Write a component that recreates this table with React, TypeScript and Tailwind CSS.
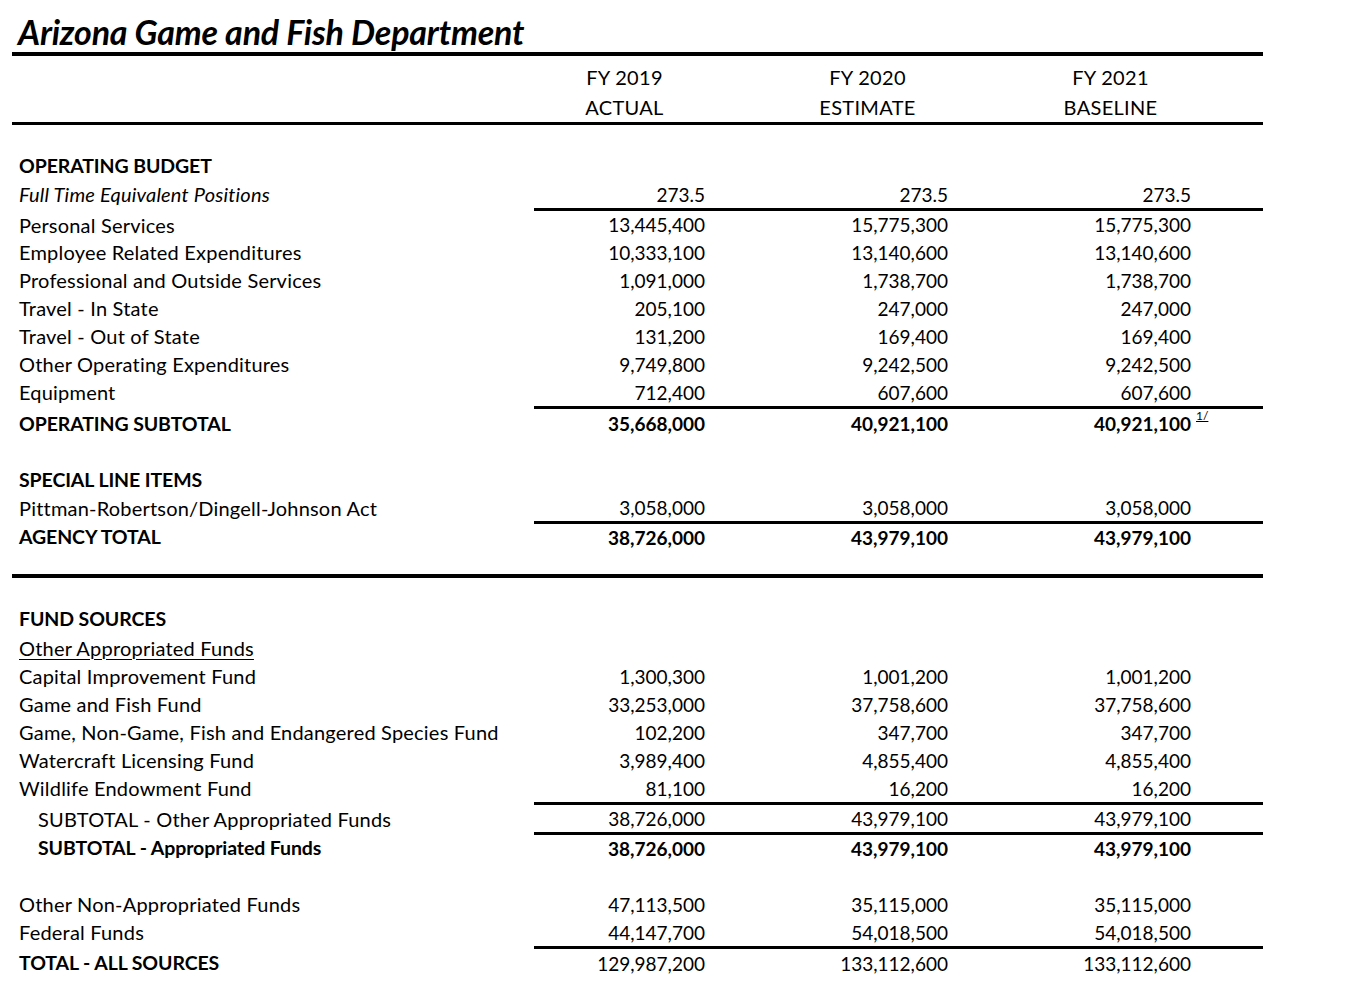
import React from "react";

type Row =
  | { kind: "spacer"; h: string }
  | { kind: "line" }
  | { kind: "thick" }
  | {
      kind: "row";
      h: string;
      label: string;
      labelStyle?: "bold" | "italic" | "underline" | "indent" | "indentBold";
      values?: string[];
      boldValues?: boolean;
      footnote?: boolean;
    };

const rows: Row[] = [
  { kind: "spacer", h: "h-[27px]" },
  { kind: "row", h: "h-[28px]", label: "OPERATING BUDGET", labelStyle: "bold" },
  { kind: "row", h: "h-[28px]", label: "Full Time Equivalent Positions", labelStyle: "italic", values: ["273.5", "273.5", "273.5"] },
  { kind: "line" },
  { kind: "row", h: "h-[27px]", label: "Personal Services", values: ["13,445,400", "15,775,300", "15,775,300"] },
  { kind: "row", h: "h-[28px]", label: "Employee Related Expenditures", values: ["10,333,100", "13,140,600", "13,140,600"] },
  { kind: "row", h: "h-[28px]", label: "Professional and Outside Services", values: ["1,091,000", "1,738,700", "1,738,700"] },
  { kind: "row", h: "h-[28px]", label: "Travel - In State", values: ["205,100", "247,000", "247,000"] },
  { kind: "row", h: "h-[28px]", label: "Travel - Out of State", values: ["131,200", "169,400", "169,400"] },
  { kind: "row", h: "h-[28px]", label: "Other Operating Expenditures", values: ["9,749,800", "9,242,500", "9,242,500"] },
  { kind: "row", h: "h-[28px]", label: "Equipment", values: ["712,400", "607,600", "607,600"] },
  { kind: "line" },
  { kind: "row", h: "h-[29px]", label: "OPERATING SUBTOTAL", labelStyle: "bold", values: ["35,668,000", "40,921,100", "40,921,100"], boldValues: true, footnote: true },
  { kind: "spacer", h: "h-[28px]" },
  { kind: "row", h: "h-[28px]", label: "SPECIAL LINE ITEMS", labelStyle: "bold" },
  { kind: "row", h: "h-[27px]", label: "Pittman-Robertson/Dingell-Johnson Act", values: ["3,058,000", "3,058,000", "3,058,000"] },
  { kind: "line" },
  { kind: "row", h: "h-[26px]", label: "AGENCY TOTAL", labelStyle: "bold", values: ["38,726,000", "43,979,100", "43,979,100"], boldValues: true },
  { kind: "spacer", h: "h-[24px]" },
  { kind: "thick" },
  { kind: "spacer", h: "h-[27px]" },
  { kind: "row", h: "h-[28px]", label: "FUND SOURCES", labelStyle: "bold" },
  { kind: "row", h: "h-[29px]", label: "Other Appropriated Funds", labelStyle: "underline" },
  { kind: "row", h: "h-[28px]", label: "Capital Improvement Fund", values: ["1,300,300", "1,001,200", "1,001,200"] },
  { kind: "row", h: "h-[28px]", label: "Game and Fish Fund", values: ["33,253,000", "37,758,600", "37,758,600"] },
  { kind: "row", h: "h-[28px]", label: "Game, Non-Game, Fish and Endangered Species Fund", values: ["102,200", "347,700", "347,700"] },
  { kind: "row", h: "h-[28px]", label: "Watercraft Licensing Fund", values: ["3,989,400", "4,855,400", "4,855,400"] },
  { kind: "row", h: "h-[28px]", label: "Wildlife Endowment Fund", values: ["81,100", "16,200", "16,200"] },
  { kind: "line" },
  { kind: "row", h: "h-[27px]", label: "SUBTOTAL - Other Appropriated Funds", labelStyle: "indent", values: ["38,726,000", "43,979,100", "43,979,100"] },
  { kind: "line" },
  { kind: "row", h: "h-[26px]", label: "SUBTOTAL - Appropriated Funds", labelStyle: "indentBold", values: ["38,726,000", "43,979,100", "43,979,100"], boldValues: true },
  { kind: "spacer", h: "h-[29px]" },
  { kind: "row", h: "h-[28px]", label: "Other Non-Appropriated Funds", values: ["47,113,500", "35,115,000", "35,115,000"] },
  { kind: "row", h: "h-[28px]", label: "Federal Funds", values: ["44,147,700", "54,018,500", "54,018,500"] },
  { kind: "line" },
  { kind: "row", h: "h-[28px]", label: "TOTAL - ALL SOURCES", labelStyle: "bold", values: ["129,987,200", "133,112,600", "133,112,600"] },
];

function labelClass(s?: string) {
  switch (s) {
    case "bold":
      return "pl-[7px] font-bold text-[19.5px] tracking-[-0.1px]";
    case "italic":
      return "pl-[7px] italic text-[20px] tracking-[0.2px]";
    case "underline":
      return "pl-[7px] underline underline-offset-[3px] decoration-1 text-[20px] tracking-[0.2px]";
    case "indent":
      return "pl-[26px] text-[20px] tracking-[0.2px]";
    case "indentBold":
      return "pl-[26px] font-bold text-[19.5px] tracking-[-0.1px]";
    default:
      return "pl-[7px] text-[20px] tracking-[0.2px]";
  }
}

export default function App() {
  return (
    <div className="min-h-[988px] w-[1360px] bg-white text-black font-['Lato',sans-serif] text-[19px]">
      <div className="ml-[12px] w-[1251px]">
        <div className="h-[56px] border-b-[4px] border-black pt-[14px] pl-[6px]">
          <div className="text-[34px] font-bold italic leading-[36px] tracking-[-0.2px]">
            Arizona Game and Fish Department
          </div>
        </div>
        <div className="grid grid-cols-[522px_243px_243px_243px] pt-[6px] h-[69px] border-b-[3px] border-black text-[20px] tracking-[0.3px]">
          <div />
          {[
            ["FY 2019", "ACTUAL"],
            ["FY 2020", "ESTIMATE"],
            ["FY 2021", "BASELINE"],
          ].map(([a, b]) => (
            <div key={a} className="pr-[62px] text-center leading-[30px]">
              <div>{a}</div>
              <div>{b}</div>
            </div>
          ))}
        </div>
        {rows.map((r, i) => {
          if (r.kind === "spacer") return <div key={i} className={r.h} />;
          if (r.kind === "thick") return <div key={i} className="h-[4px] bg-black" />;
          if (r.kind === "line")
            return (
              <div key={i} className="grid grid-cols-[522px_729px]">
                <div />
                <div className="h-[3px] bg-black" />
              </div>
            );
          return (
            <div key={i} className={`grid grid-cols-[522px_243px_243px_243px] items-center ${r.h}`}>
              <div className={`${labelClass(r.labelStyle)} whitespace-nowrap leading-none`}>{r.label}</div>
              {(r.values ?? ["", "", ""]).map((v, j) => (
                <div key={j} className={`pr-[72px] text-right leading-none ${r.boldValues ? "font-bold" : ""}`}>
                  <span className="relative">
                    {v}
                    {r.footnote && j === 2 && (
                      <span className="absolute left-full top-[-2px] ml-[5px] text-[12px] font-normal underline">1/</span>
                    )}
                  </span>
                </div>
              ))}
            </div>
          );
        })}
      </div>
    </div>
  );
}
